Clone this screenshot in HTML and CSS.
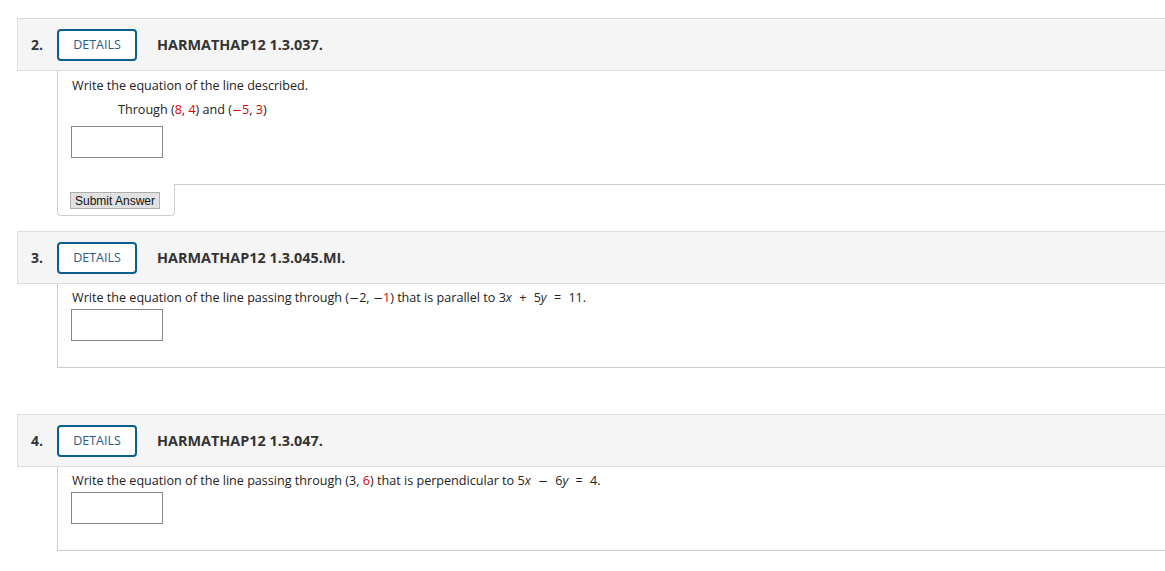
FILE: index.html
```html
<!DOCTYPE html>
<html lang="en">
<head>
  <meta charset="UTF-8" />
  <title>Assignment</title>
  <link rel="stylesheet" href="styles.css">
</head>
<body>
  <div class="page">
    <div class="question">
      <div class="q-head">
        <span class="q-num">2.</span>
        <button class="details-btn">DETAILS</button>
        <span class="q-title">HARMATHAP12 1.3.037.</span>
      </div>
      <div class="q-body">
        <div class="q-main">
          <p class="q-text">Write the equation of the line described.</p>
          <p class="q-text indent">Through (<span class="red">8</span>, <span class="red">4</span>) and (<span class="red"><span class="minus">&minus;</span>5</span>, <span class="red">3</span>)</p>
          <input class="answer" type="text">
        </div>
        <div class="q-foot">
          <div class="submit-tab"><button class="submit-btn">Submit Answer</button></div>
          <div class="q-foot-fill"></div>
        </div>
      </div>
    </div>

    <div class="question spaced">
      <div class="q-head">
        <span class="q-num">3.</span>
        <button class="details-btn">DETAILS</button>
        <span class="q-title">HARMATHAP12 1.3.045.MI.</span>
      </div>
      <div class="q-body">
        <div class="q-main closed">
          <p class="q-text">Write the equation of the line passing through (<span class="minus">&minus;</span>2, <span class="minus">&minus;</span><span class="red">1</span>) that is parallel to <span class="math">3<i>x</i> <span class="op">+</span> 5<i>y</i> <span class="op">=</span> 11</span>.</p>
          <input class="answer" type="text">
        </div>
      </div>
    </div>

    <div class="question">
      <div class="q-head">
        <span class="q-num">4.</span>
        <button class="details-btn">DETAILS</button>
        <span class="q-title">HARMATHAP12 1.3.047.</span>
      </div>
      <div class="q-body">
        <div class="q-main closed">
          <p class="q-text">Write the equation of the line passing through (3, <span class="red">6</span>) that is perpendicular to <span class="math">5<i>x</i> <span class="op minus">&minus;</span> 6<i>y</i> <span class="op">=</span> 4</span>.</p>
          <input class="answer" type="text">
        </div>
      </div>
    </div>
  </div>
</body>
</html>
```

FILE: styles.css
```css
body {
  margin: 0;
  font-family: 'Open Sans', sans-serif;
  color: #222;
  background: #fff;
}

.page {
  padding: 18px 0 0 17px;
  overflow: hidden;
}

.question {
  margin: 0 -20px 15px 0;
}

.question.spaced {
  margin-bottom: 46px;
}

.q-head {
  display: flex;
  align-items: center;
  height: 51px;
  padding-left: 13px;
  background: #f5f5f5;
  border: 1px solid #ddd;
}

.q-num {
  width: 26px;
  font-size: 14px;
  font-weight: 700;
  color: #333;
}

.details-btn {
  width: 80px;
  height: 32px;
  padding: 0;
  background: #fff;
  border: 2px solid #0b5e8f;
  border-radius: 4px;
  font-family: 'Open Sans', sans-serif;
  font-size: 12.5px;
  font-weight: 500;
  color: #2d5a88;
  cursor: pointer;
}

.q-title {
  margin-left: 20px;
  font-size: 14.4px;
  font-weight: 700;
  color: #333;
}

.q-body {
  margin-left: 40px;
}

.q-main {
  border-left: 1px solid #ccc;
  padding: 6px 0 26px 13px;
}

.q-main.closed {
  padding-top: 5px;
  border-bottom: 1px solid #ccc;
}

.q-text {
  margin: 0;
  padding-left: 1px;
  font-size: 12.6px;
  line-height: 18px;
}

.q-text.indent {
  padding-left: 47px;
  margin-top: 6px;
}

.q-text + .answer {
  margin-top: 2px;
}

.q-text.indent + .answer {
  margin-top: 7px;
}

.red {
  color: #e30000;
}

.minus {
  font-family: 'DejaVu Sans', sans-serif;
  font-size: 12px;
}

.math {
  word-spacing: 1px;
}

.op {
  margin: 0 3px;
}

.answer {
  display: block;
  box-sizing: border-box;
  width: 92px;
  height: 32px;
  margin: 0;
  border: 1px solid #888;
  background: #fff;
}

.q-foot {
  display: flex;
}

.submit-tab {
  width: 90px;
  padding: 8px 14px 6px 12px;
  border: 1px solid #ccc;
  border-top: none;
  border-radius: 0 0 4px 4px;
}

.submit-btn {
  display: block;
  width: 90px;
  height: 17px;
  padding: 0;
  background: #e1e1e1;
  border: 1px solid #adadad;
  font-family: 'Liberation Sans', Arial, sans-serif;
  font-size: 12px;
  color: #111;
}

.q-foot-fill {
  flex: 1;
  border-top: 1px solid #ccc;
}
```
